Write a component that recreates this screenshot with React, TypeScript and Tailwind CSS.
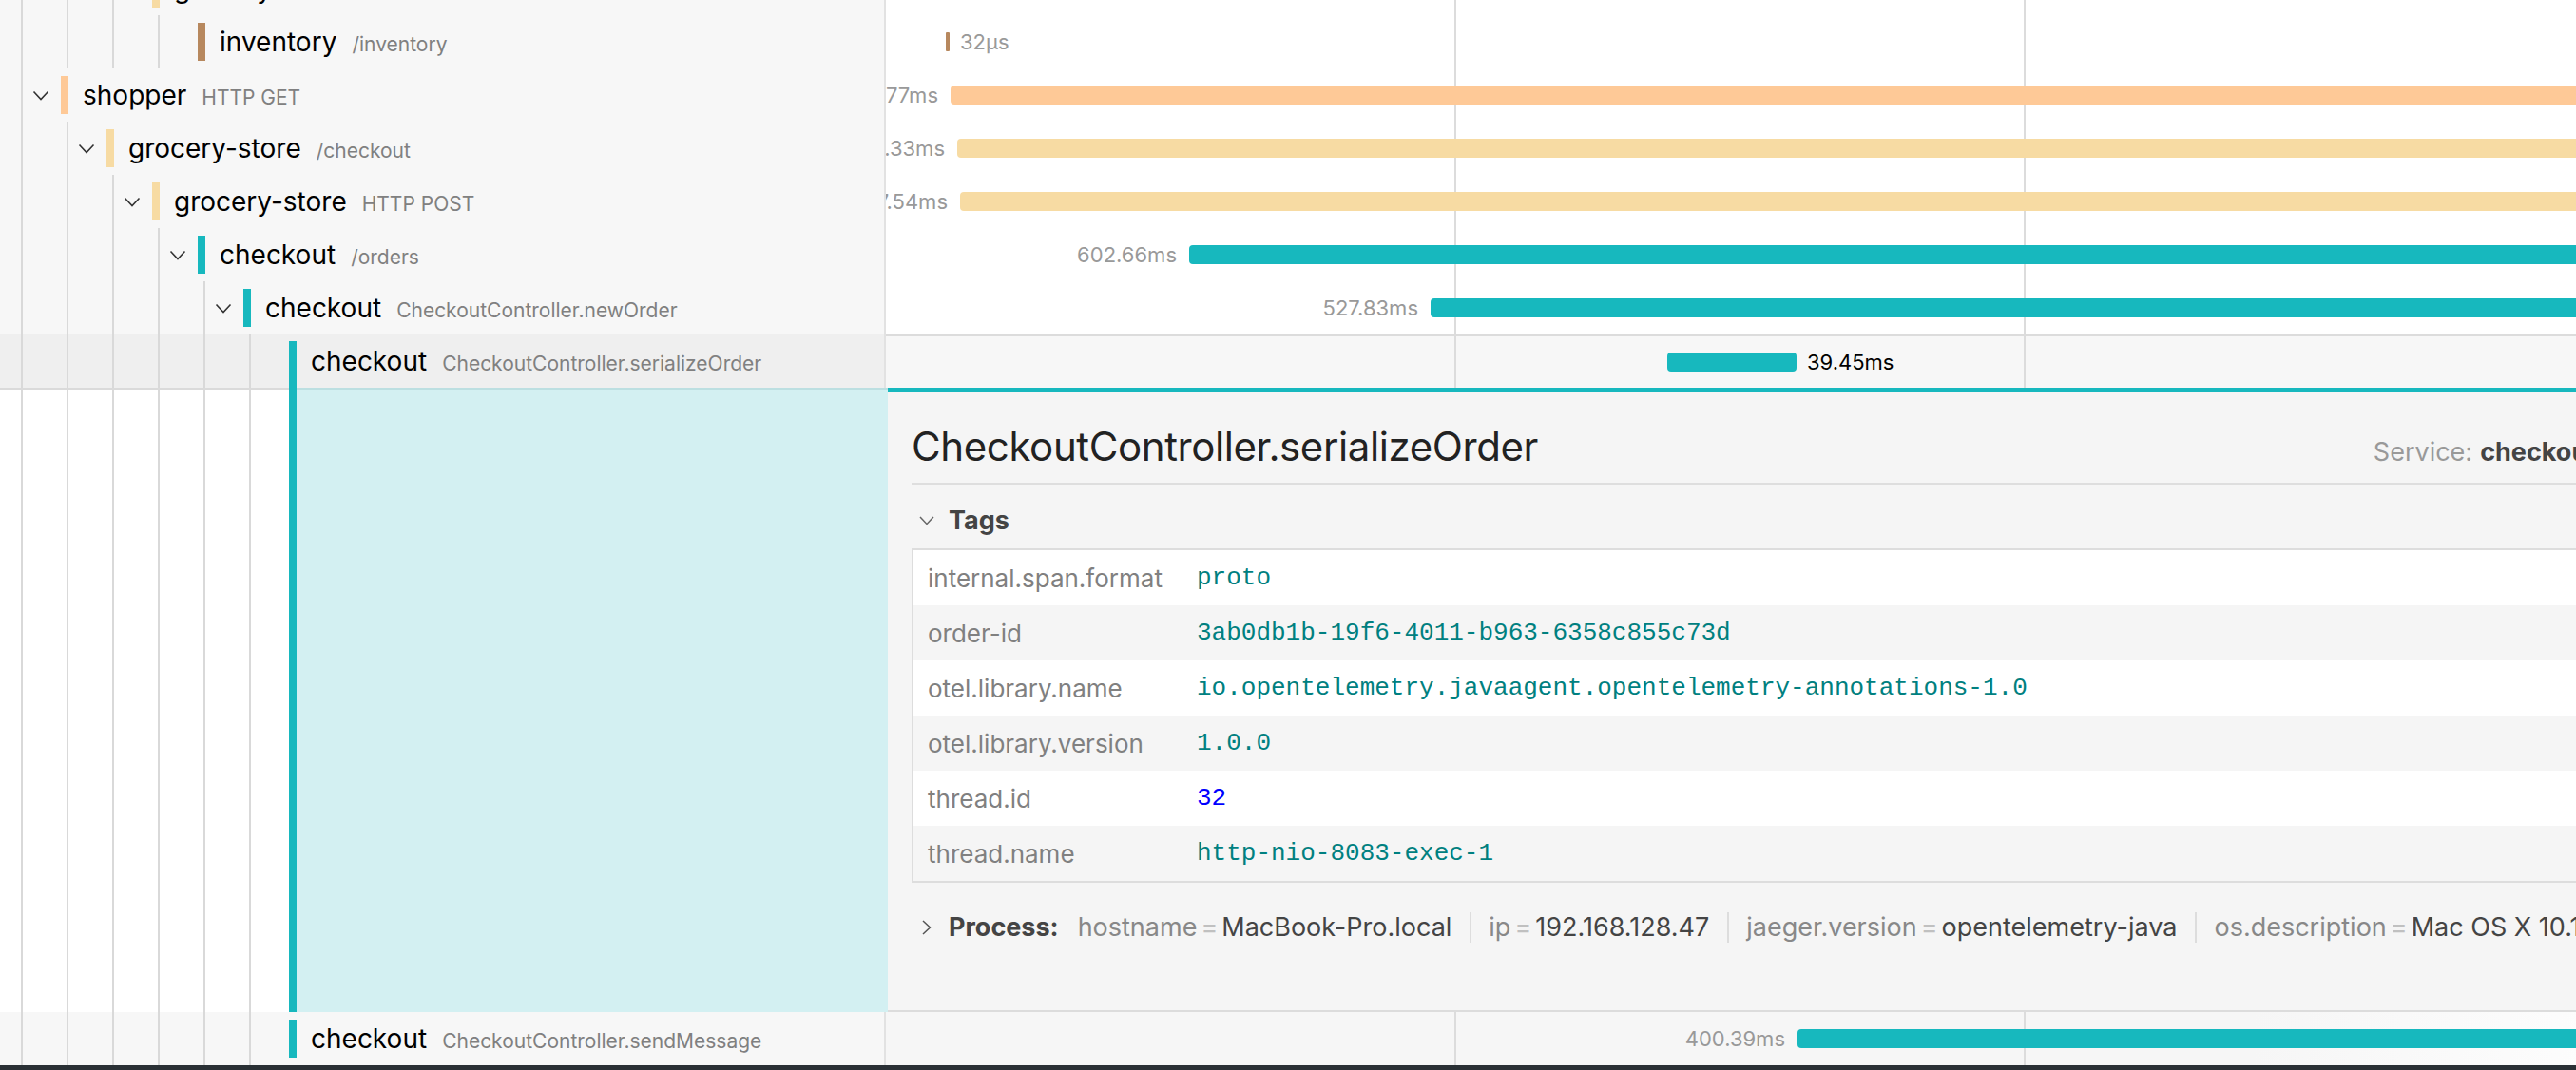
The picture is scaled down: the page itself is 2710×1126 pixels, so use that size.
import React from "react";

type TreeRow = {
  depth: number;
  svc: string;
  op: string;
  bar: string;
  toggle: boolean;
  start: number;
  width: number;
  label: string;
  side: "left" | "right";
  selected?: boolean;
};

const rows: TreeRow[] = [
  { depth: 2, svc: "grocery-store", op: "HTTP GET", bar: "bg-[#f7dba3]", toggle: true, start: 70, width: 2300, label: "845.12ms", side: "left" },
  { depth: 3, svc: "inventory", op: "/inventory", bar: "bg-[#b7885e]", toggle: false, start: 63, width: 4, label: "32µs", side: "right" },
  { depth: 0, svc: "shopper", op: "HTTP GET", bar: "bg-[#fec997]", toggle: true, start: 68, width: 2310, label: "959.77ms", side: "left" },
  { depth: 1, svc: "grocery-store", op: "/checkout", bar: "bg-[#f7dba3]", toggle: true, start: 75, width: 2300, label: "958.33ms", side: "left" },
  { depth: 2, svc: "grocery-store", op: "HTTP POST", bar: "bg-[#f7dba3]", toggle: true, start: 78, width: 2300, label: "957.54ms", side: "left" },
  { depth: 3, svc: "checkout", op: "/orders", bar: "bg-[#17b8be]", toggle: true, start: 319, width: 2050, label: "602.66ms", side: "left" },
  { depth: 4, svc: "checkout", op: "CheckoutController.newOrder", bar: "bg-[#17b8be]", toggle: true, start: 573, width: 1800, label: "527.83ms", side: "left" },
];

const selectedRow: TreeRow = {
  depth: 5, svc: "checkout", op: "CheckoutController.serializeOrder", bar: "bg-[#17b8be]", toggle: false, start: 822, width: 136, label: "39.45ms", side: "right", selected: true,
};

const lastRow: TreeRow = {
  depth: 5, svc: "checkout", op: "CheckoutController.sendMessage", bar: "bg-[#17b8be]", toggle: false, start: 959, width: 1400, label: "400.39ms", side: "left",
};

const tags: { k: string; v: string; num?: boolean }[] = [
  { k: "internal.span.format", v: "proto" },
  { k: "order-id", v: "3ab0db1b-19f6-4011-b963-6358c855c73d" },
  { k: "otel.library.name", v: "io.opentelemetry.javaagent.opentelemetry-annotations-1.0" },
  { k: "otel.library.version", v: "1.0.0" },
  { k: "thread.id", v: "32", num: true },
  { k: "thread.name", v: "http-nio-8083-exec-1" },
];

const processItems = [
  { k: "hostname", v: "MacBook-Pro.local" },
  { k: "ip", v: "192.168.128.47" },
  { k: "jaeger.version", v: "opentelemetry-java" },
  { k: "os.description", v: "Mac OS X 10.15.7" },
  { k: "os.type", v: "darwin" },
];

function ChevronDown() {
  return (
    <svg width="18" height="11" viewBox="0 0 18 11" fill="none">
      <polyline points="1.5,1.5 9,9.5 16.5,1.5" stroke="#333" strokeWidth="1.6" />
    </svg>
  );
}

function Guide() {
  return (
    <div className="w-[48px] h-full shrink-0 flex">
      <div className="ml-[22px] w-[2px] h-full bg-[#d9d9d9]" />
    </div>
  );
}

function Ticks() {
  return (
    <>
      <div className="absolute top-0 bottom-0 left-[598px] w-[2px] bg-[#dcdcdc]" />
      <div className="absolute top-0 bottom-0 left-[1197px] w-[2px] bg-[#dcdcdc]" />
      <div className="absolute top-0 bottom-0 left-[1796px] w-[2px] bg-[#dcdcdc]" />
    </>
  );
}

function SpanRow({ row, last }: { row: TreeRow; last?: boolean }) {
  const sel = !!row.selected;
  return (
    <div className="flex h-[56px] shrink-0">
      <div
        className={`w-[932px] shrink-0 h-full flex items-center border-r-2 border-[#e2e2e2] ${
          sel ? "bg-[#efefef]" : "bg-[#f7f7f7]"
        }`}
      >
        {Array.from({ length: row.depth }).map((_, i) => (
          <Guide key={i} />
        ))}
        <div className="w-[64px] h-full shrink-0 flex items-center">
          <div className="ml-[22px] w-[2px] h-full bg-[#d9d9d9]" />
          <div className="ml-[10px] w-[18px] flex justify-center">{row.toggle && <ChevronDown />}</div>
        </div>
        {sel ? (
          <div className={`w-[8px] h-[49px] self-end shrink-0 ${row.bar}`} />
        ) : (
          <div className={`w-[8px] h-[40px] shrink-0 ${row.bar}`} />
        )}
        <div className="ml-[15px] flex items-baseline whitespace-nowrap">
          <span className="text-[28px] text-black">{row.svc}</span>
          <span className="ml-[16px] text-[21px] text-[#808080]">{row.op}</span>
        </div>
      </div>
      <div
        className={`relative flex-1 h-full overflow-hidden ${
          sel ? "bg-[#f7f7f7] border-t-2 border-[#dcdcdc]" : last ? "bg-[linear-gradient(90deg,#f6f6f6_0%,#f6f6f6_60%,#ffffff_80%)]" : "bg-white"
        }`}
      >
        <Ticks />
        <div
          className={`absolute top-1/2 -translate-y-1/2 h-[20px] ${row.width > 10 ? "rounded-[4px]" : "rounded-[1px]"} ${row.bar}`}
          style={{ left: row.start, width: row.width }}
        >
          {row.side === "left" ? (
            <span className="absolute right-full mr-[13px] top-1/2 -translate-y-1/2 whitespace-nowrap text-[22px] text-[#999]">
              {row.label}
            </span>
          ) : (
            <span
              className={`absolute left-full ml-[11px] top-1/2 -translate-y-1/2 whitespace-nowrap text-[22px] ${
                sel ? "text-black" : "text-[#999]"
              }`}
            >
              {row.label}
            </span>
          )}
        </div>
      </div>
    </div>
  );
}

function DetailRow() {
  return (
    <div className="flex h-[657px] shrink-0">
      <div className="w-[934px] shrink-0 flex h-full">
        <div className="flex h-full bg-white border-t-2 border-[#dadada]">
          {Array.from({ length: 5 }).map((_, i) => (
            <Guide key={i} />
          ))}
          <div className="w-[64px] h-full shrink-0 flex">
            <div className="ml-[22px] w-[2px] h-full bg-[#d9d9d9]" />
          </div>
        </div>
        <div className="w-[8px] h-full shrink-0 bg-[#17b8be]" />
        <div className="flex-1 h-full bg-[#d3f0f2] border-t-2 border-[#bcdfe1]" />
      </div>
      <div className="flex-1 h-full bg-[#f5f5f5] border-t-[5px] border-t-[#17b8be] border-b-2 border-b-[#dcdcdc] px-[25px] flex flex-col">
        <div className="flex items-baseline justify-between pt-[27px] pb-[8px] border-b-2 border-[#dedede]">
          <h2 className="text-[42px] leading-[60px] text-[#222] tracking-[-0.4px]">CheckoutController.serializeOrder</h2>
          <div className="flex items-baseline text-[27px] whitespace-nowrap pr-[35px]">
            <span className="text-[#999]">Service:</span>
            <span className="ml-[8px] font-bold text-[#444]">checkout</span>
            <span className="mx-[18px] w-[2px] h-[30px] bg-[#ddd] self-center" />
            <span className="text-[#999]">Duration:</span>
            <span className="ml-[8px] font-bold text-[#444]">39.45ms</span>
            <span className="mx-[18px] w-[2px] h-[30px] bg-[#ddd] self-center" />
            <span className="text-[#999]">Start Time:</span>
            <span className="ml-[8px] font-bold text-[#444]">1.06s</span>
          </div>
        </div>
        <div className="flex items-center h-[40px] mt-[18px]">
          <svg className="ml-[8px]" width="16" height="10" viewBox="0 0 16 10" fill="none">
            <polyline points="1,1 8,8.5 15,1" stroke="#666" strokeWidth="1.5" />
          </svg>
          <span className="ml-[15px] text-[27px] font-bold text-[#444]">Tags</span>
        </div>
        <div className="mt-[9px] border-2 border-[#dddddd] flex flex-col">
          {tags.map((t, i) => (
            <div key={t.k} className={`flex items-center h-[58px] ${i % 2 === 0 ? "bg-white" : "bg-[#f5f5f5]"}`}>
              <div className="w-[298px] shrink-0 pl-[15px] text-[26px] text-[#808080] whitespace-nowrap">{t.k}</div>
              <div
                className={`font-['Liberation_Mono',monospace] text-[26px] whitespace-nowrap ${
                  t.num ? "text-[#0000ff]" : "text-[#008080]"
                }`}
              >
                {t.v}
              </div>
            </div>
          ))}
        </div>
        <div className="flex items-center h-[40px] mt-[27px] whitespace-nowrap">
          <svg className="ml-[11px]" width="10" height="16" viewBox="0 0 10 16" fill="none">
            <polyline points="1,1 8.5,8 1,15" stroke="#555" strokeWidth="1.5" />
          </svg>
          <span className="ml-[18px] text-[27px] font-bold text-[#444]">Process:</span>
          <div className="ml-[20px] flex items-center h-full">
            {processItems.map((p, i) => (
              <div
                key={p.k}
                className={`flex items-baseline h-[32px] text-[27px] leading-[32px] ${i > 0 ? "border-l-2 border-[#dddddd] pl-[18px]" : ""} pr-[19px]`}
              >
                <span className="text-[#888]">{p.k}</span>
                <span className="mx-[4px] text-[#c0c0c0]">=</span>
                <span className="text-[#444]">{p.v}</span>
              </div>
            ))}
          </div>
        </div>
      </div>
    </div>
  );
}

export default function App() {
  return (
    <div className="w-[2710px] h-[1126px] overflow-hidden bg-white font-['Inter',sans-serif] flex flex-col">
      <div className="w-[3329px] h-[1121px] shrink-0 overflow-hidden">
        <div className="-mt-[40px] flex flex-col">
          {rows.map((r, i) => (
            <SpanRow key={i} row={r} />
          ))}
          <SpanRow row={selectedRow} />
          <DetailRow />
          <SpanRow row={lastRow} last />
        </div>
      </div>
      <div className="h-[5px] shrink-0 bg-[#2a3035]" />
    </div>
  );
}
